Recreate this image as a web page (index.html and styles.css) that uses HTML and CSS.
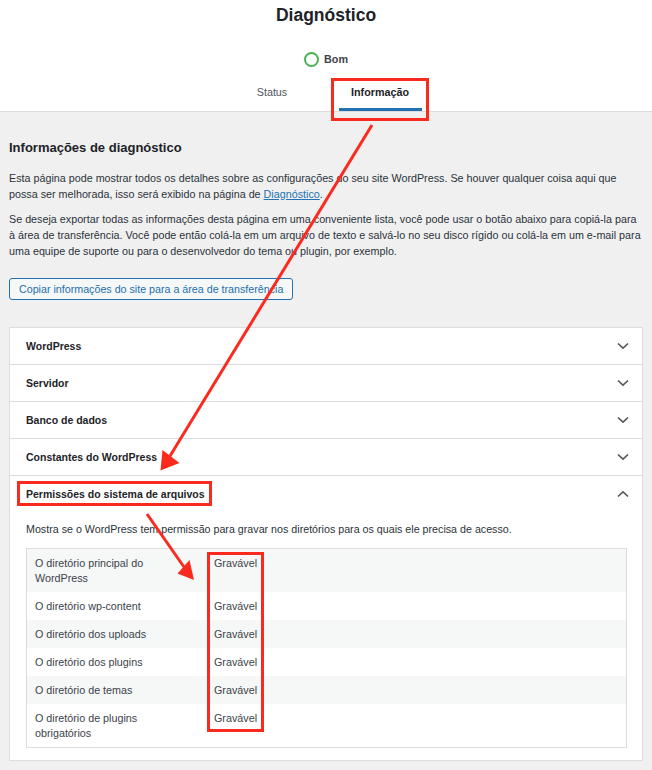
FILE: index.html
```html
<!DOCTYPE html>
<html lang="pt-BR">
<head>
    <meta charset="UTF-8">
    <meta name="viewport" content="width=device-width, initial-scale=1.0">
    <title>Diagnóstico</title>
    <link rel="stylesheet" href="styles.css">
</head>
<body>

<div class="health-header">
    <h1>Diagnóstico</h1>
    <div class="score">
        <span class="ring"></span>
        <span class="score-label">Bom</span>
    </div>
    <nav class="tabs">
        <a class="tab" href="#">Status</a>
        <a class="tab active" href="#">Informação</a>
    </nav>
</div>

<div class="health-body">
    <h2>Informações de diagnóstico</h2>
    <p>Esta página pode mostrar todos os detalhes sobre as configurações do seu site WordPress. Se houver qualquer coisa aqui que possa ser melhorada, isso será exibido na página de <a href="#">Diagnóstico</a>.</p>
    <p class="second">Se deseja exportar todas as informações desta página em uma conveniente lista, você pode usar o botão abaixo para copiá-la para à área de transferência. Você pode então colá-la em um arquivo de texto e salvá-lo no seu disco rígido ou colá-la em um e-mail para uma equipe de suporte ou para o desenvolvedor do tema ou plugin, por exemplo.</p>
    <button class="copy-button" type="button">Copiar informações do site para a área de transferência</button>

    <div class="accordion">
        <div class="acc-item">
            <button class="acc-trigger" type="button">
                <span>WordPress</span>
                <svg class="chevron" width="12" height="8" viewBox="0 0 12 8"><path d="M1 1.5 L6 6.2 L11 1.5"/></svg>
            </button>
        </div>
        <div class="acc-item">
            <button class="acc-trigger" type="button">
                <span>Servidor</span>
                <svg class="chevron" width="12" height="8" viewBox="0 0 12 8"><path d="M1 1.5 L6 6.2 L11 1.5"/></svg>
            </button>
        </div>
        <div class="acc-item">
            <button class="acc-trigger" type="button">
                <span>Banco de dados</span>
                <svg class="chevron" width="12" height="8" viewBox="0 0 12 8"><path d="M1 1.5 L6 6.2 L11 1.5"/></svg>
            </button>
        </div>
        <div class="acc-item">
            <button class="acc-trigger" type="button">
                <span>Constantes do WordPress</span>
                <svg class="chevron" width="12" height="8" viewBox="0 0 12 8"><path d="M1 1.5 L6 6.2 L11 1.5"/></svg>
            </button>
        </div>
        <div class="acc-item open">
            <button class="acc-trigger" type="button">
                <span>Permissões do sistema de arquivos</span>
                <svg class="chevron" width="12" height="8" viewBox="0 0 12 8"><path d="M1 6.5 L6 1.8 L11 6.5"/></svg>
            </button>
            <div class="acc-panel">
                <p>Mostra se o WordPress tem permissão para gravar nos diretórios para os quais ele precisa de acesso.</p>
                <table class="info-table">
                    <tr><td>O diretório principal do WordPress</td><td>Gravável</td></tr>
                    <tr><td>O diretório wp-content</td><td>Gravável</td></tr>
                    <tr><td>O diretório dos uploads</td><td>Gravável</td></tr>
                    <tr><td>O diretório dos plugins</td><td>Gravável</td></tr>
                    <tr><td>O diretório de temas</td><td>Gravável</td></tr>
                    <tr><td>O diretório de plugins obrigatórios</td><td>Gravável</td></tr>
                </table>
            </div>
        </div>
    </div>
</div>

<!-- anotações em vermelho por cima da captura -->
<svg class="marks" width="652" height="770" viewBox="0 0 652 770">
    <rect x="332.5" y="79.5" width="95" height="40"/>
    <rect x="18.5" y="482.5" width="192" height="22"/>
    <rect x="208.5" y="553.5" width="54" height="177"/>
    <line x1="372" y1="125" x2="170" y2="456"/>
    <polygon points="160.5,470.5 162.5,450 179.5,463"/>
    <line x1="147" y1="514" x2="184" y2="567"/>
    <polygon points="194,580 177.5,573.5 189.5,560"/>
</svg>

</body>
</html>
```

FILE: styles.css
```css
body {
    margin: 0;
    padding: 0;
    background-color: #f0f0f1;
    color: #1d2327;
    font-family: "Liberation Sans", Arial, sans-serif;
    font-size: 10.75px;
    position: relative;
}
a {
    color: #2271b1;
}
.health-header {
    background-color: #fff;
    border-bottom: 1px solid #dcdcde;
    padding-top: 4px;
    display: flex;
    flex-direction: column;
    align-items: center;
}
.health-header h1 {
    margin: 0;
    font-size: 17.5px;
    line-height: 22px;
    font-weight: 600;
}
.score {
    margin-top: 23px;
    height: 20px;
    display: flex;
    align-items: center;
    gap: 5px;
}
.ring {
    width: 11px;
    height: 11px;
    border: 2px solid #46b450;
    border-radius: 50%;
}
.score-label {
    font-weight: 600;
    color: #3c434a;
    font-size: 10.75px;
}
.tabs {
    margin-top: 3px;
    display: flex;
    gap: 25px;
}
.tab {
    width: 83px;
    padding: 12px 0 8px;
    line-height: 16px;
    text-align: center;
    text-decoration: none;
    color: #50575e;
    border-bottom: 3px solid transparent;
}
.tab.active {
    color: #1d2327;
    font-weight: 600;
    border-bottom-color: #2271b1;
}
.health-body {
    padding: 0 9px;
    color: #2c3338;
}
.health-body h2 {
    margin: 27px 0 0;
    font-size: 13px;
    line-height: 18px;
    font-weight: 600;
    color: #1d2327;
}
.health-body > p {
    margin: 13px -2px 0 0;
    line-height: 16px;
}
.health-body > p.second {
    margin-top: 9px;
}
.copy-button {
    display: block;
    margin-top: 19px;
    height: 22px;
    padding: 0 9px;
    font-family: inherit;
    font-size: 10.7px;
    color: #2271b1;
    background-color: #f6f7f7;
    border: 1px solid #2271b1;
    border-radius: 3px;
}
.accordion {
    margin-top: 27px;
    background-color: #fff;
    border: 1px solid #dcdcde;
}
.acc-item {
    border-bottom: 1px solid #dcdcde;
}
.acc-item:last-child {
    border-bottom: none;
}
.acc-trigger {
    width: 100%;
    height: 36px;
    padding: 0 13px 0 16px;
    display: flex;
    align-items: center;
    justify-content: space-between;
    background: none;
    border: none;
    font-family: inherit;
    font-size: 10.5px;
    font-weight: 600;
    color: #1d2327;
    text-align: left;
}
.chevron {
    fill: none;
    stroke: #50575e;
    stroke-width: 1.6;
}
.acc-panel {
    padding: 9px 15px 12px 16px;
}
.acc-panel p {
    margin: 0 0 11px;
    line-height: 16px;
    font-size: 10.7px;
}
.info-table {
    width: 100%;
    border-collapse: collapse;
    border: 1px solid #dcdcde;
}
.info-table td {
    padding: 6.5px 8px;
    line-height: 15px;
    vertical-align: top;
    color: #3c434a;
}
.info-table td:first-child {
    width: 147px;
    padding-right: 24px;
}
.info-table tr:nth-child(odd) {
    background-color: #f6f7f7;
}
.marks {
    position: absolute;
    left: 0;
    top: 0;
    pointer-events: none;
}
.marks rect {
    fill: none;
    stroke: #fb2a1f;
    stroke-width: 3;
}
.marks line {
    stroke: #fb2a1f;
    stroke-width: 3;
}
.marks polygon {
    fill: #fb2a1f;
}
```
